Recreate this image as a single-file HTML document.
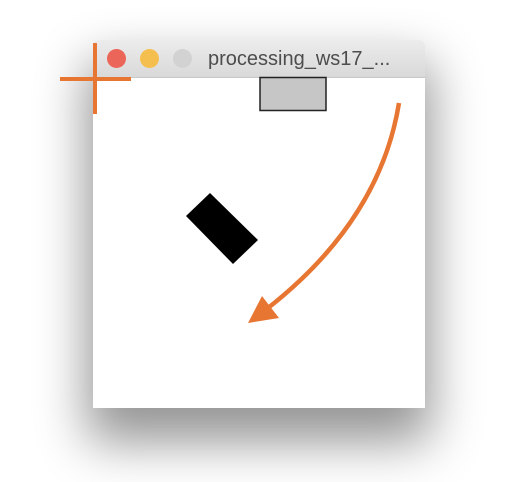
<!DOCTYPE html>
<html><head><style>
body{margin:0;width:516px;height:482px;background:#fff;overflow:hidden;position:relative;font-family:"Liberation Sans",sans-serif}
.shadow{position:absolute;left:93px;top:40px;width:332px;height:368px;box-shadow:0 28px 50px 6px rgba(0,0,0,0.42);border-radius:5px}
.win{position:absolute;left:93px;top:40px;width:332px;height:368px;background:#fff;border-radius:5px 5px 0 0;overflow:hidden}
.tb{height:37px;background:linear-gradient(#ececec,#d9d9d9);border-bottom:1px solid #c8c8c8;position:relative}
.dot{position:absolute;top:9px;width:19px;height:19px;border-radius:50%}
.t{position:absolute;left:115px;top:8px;font-size:20px;color:#4d4d4d}
</style></head><body>
<div class="shadow"></div>
<div class="win"><div class="tb">
<div class="dot" style="left:14px;background:#ec6559"></div>
<div class="dot" style="left:47px;background:#f5bf4f"></div>
<div class="dot" style="left:80px;background:#d2d2d2"></div>
<div class="t">processing_ws17_...</div>
</div></div>
<svg width="516" height="482" style="position:absolute;left:0;top:0">
<rect x="260" y="77.5" width="66" height="33" fill="#c6c6c6" stroke="#222" stroke-width="1.5"/>
<polygon points="186,216 210,193 258,240 233,264" fill="#000"/>
<path d="M399 103 Q380 220 268 308" fill="none" stroke="#e87633" stroke-width="4.5"/>
<polygon points="248,323 262,296 279,318" fill="#e87633"/>
<rect x="93" y="43" width="4" height="71" fill="#e87633"/>
<rect x="60" y="77" width="71" height="4" fill="#e87633"/>
</svg>
</body></html>
